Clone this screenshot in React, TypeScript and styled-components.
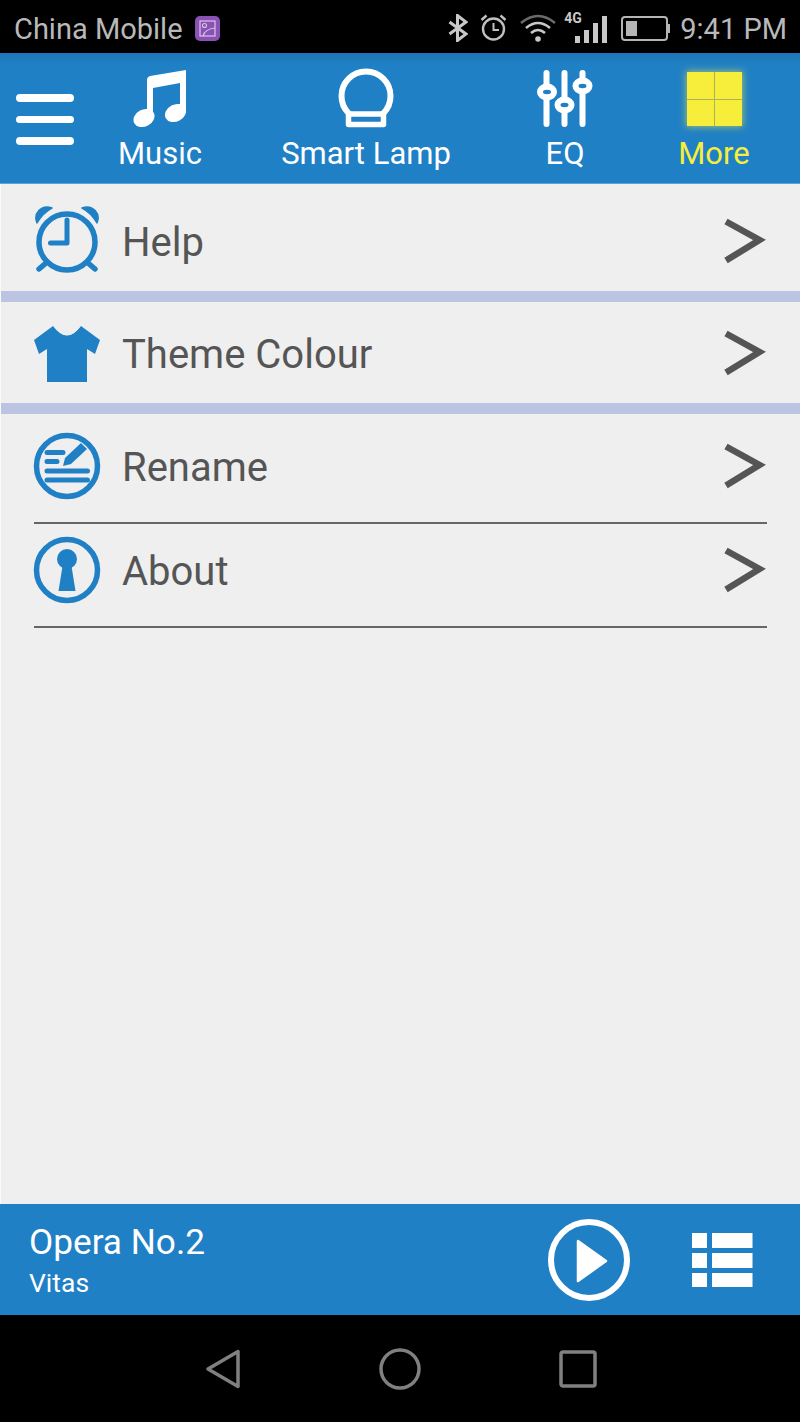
import React from "react";
import styled, { createGlobalStyle } from "styled-components";

const Global = createGlobalStyle`
  html, body { margin: 0; padding: 0; background: #000; }
  * { box-sizing: border-box; }
  #root { width: 800px; height: 1422px; }
`;

const BLUE = "#2080c5";

const Screen = styled.div`
  width: 800px;
  height: 1422px;
  display: flex;
  flex-direction: column;
  font-family: Roboto, "Liberation Sans", sans-serif;
  background: #efefef;
  overflow: hidden;
`;

const StatusBar = styled.div`
  height: 53px;
  flex: none;
  background: #000;
  color: #b9b9b9;
  display: flex;
  align-items: center;
  padding: 3px 13px 0 14px;
`;

const Carrier = styled.span`
  font-size: 29px;
  line-height: 1;
  position: relative;
  top: 1px;
`;

const StatusRight = styled.div`
  margin-left: auto;
  display: flex;
  align-items: center;
`;

const Clock = styled.span`
  font-size: 29px;
  line-height: 1;
  margin-left: 10px;
  position: relative;
  top: 1px;
`;

const Icon = styled.svg<{ $ml?: number }>`
  display: block;
  flex: none;
  margin-left: ${(p) => p.$ml ?? 0}px;
`;

const NetWrap = styled.div`
  position: relative;
  width: 43px;
  height: 32px;
  margin-left: 8px;
  flex: none;
`;

const FourG = styled.span`
  position: absolute;
  left: 0;
  top: -1px;
  font-size: 14px;
  line-height: 14px;
  font-weight: 700;
  color: #c8c8c8;
`;

const Header = styled.div`
  height: 131px;
  flex: none;
  background: linear-gradient(#1f75b6 0, ${BLUE} 12px);
  display: flex;
  border-bottom: 1px solid #5aa2d6;
`;

const Burger = styled.div`
  width: 74px;
  flex: none;
  padding: 41px 0 0 16px;
  display: flex;
  flex-direction: column;
  gap: 14px;
`;

const BurgerBar = styled.span`
  display: block;
  width: 58px;
  height: 7.5px;
  border-radius: 4px;
  background: #fff;
`;

const Tab = styled.div<{ $w: number; $on?: boolean }>`
  width: ${(p) => p.$w}px;
  flex: none;
  display: flex;
  flex-direction: column;
  align-items: center;
  color: ${(p) => (p.$on ? "#f7ee3c" : "#fff")};
`;

const TabIcon = styled.div`
  height: 78px;
  padding-top: 15px;
  display: flex;
  justify-content: center;
`;

const TabLabel = styled.span`
  font-size: 31px;
  line-height: 36px;
  margin-top: 5px;
`;

const Tiles = styled.div`
  width: 55px;
  height: 54px;
  margin-top: 4px;
  display: grid;
  grid-template-columns: 1fr 1fr;
  grid-template-rows: 1fr 1fr;
  gap: 1px;
  background: #a9b35a;
  box-shadow: 0 0 7px 1px rgba(247, 238, 60, 0.55);
`;

const Tile = styled.span`
  background: #f7ee3c;
`;

const List = styled.div`
  flex: 1;
  display: flex;
  flex-direction: column;
  background: #efefef;
  border-left: 1px solid #fafafa;
`;

const Row = styled.div<{ $h: number; $top?: number; $bottom?: number }>`
  height: ${(p) => p.$h}px;
  flex: none;
  display: flex;
  align-items: center;
  padding: ${(p) => p.$top ?? 0}px 34px ${(p) => p.$bottom ?? 0}px 32px;
`;

const RowLabel = styled.span`
  font-size: 40px;
  line-height: 44px;
  color: #555;
  margin-left: 21px;
  flex: 1;
  position: relative;
  top: 2px;
`;

const Band = styled.div`
  height: 11px;
  flex: none;
  background: #bcc4e4;
`;

const Rule = styled.div`
  height: 2px;
  flex: none;
  margin: 0 33px;
  background: #666;
`;

const Player = styled.div`
  height: 111px;
  flex: none;
  background: ${BLUE};
  display: flex;
  align-items: center;
  padding: 0 47px 0 29px;
  color: #fff;
`;

const Track = styled.div`
  flex: 1;
  display: flex;
  flex-direction: column;
  padding-top: 1px;
`;

const TrackTitle = styled.span`
  font-size: 35.2px;
  line-height: 40px;
`;

const TrackArtist = styled.span`
  font-size: 26.5px;
  line-height: 30px;
  margin-top: 6px;
`;

const NavBar = styled.div`
  height: 107px;
  flex: none;
  background: #000;
  display: flex;
  align-items: center;
  justify-content: center;
  padding-top: 1px;
`;

const NavSlot = styled.div<{ $w: number }>`
  width: ${(p) => p.$w}px;
  display: flex;
  justify-content: center;
`;

const Chevron = () => (
  <Icon width="44" height="46" viewBox="0 0 44 46">
    <path d="M4 3.5 L37.5 22 L4 42.5" fill="none" stroke="#555" strokeWidth="6.5" />
  </Icon>
);

const AlarmClock = () => (
  <Icon width="68" height="72" viewBox="33 206 68 72">
    <circle cx="67" cy="243" r="28" fill="none" stroke={BLUE} strokeWidth="5.5" />
    <path d="M67 221 V244 H50.5" fill="none" stroke={BLUE} strokeWidth="5" strokeLinecap="round" strokeLinejoin="round" />
    <path d="M37 224 C33 215 41 205 52 209 C46 212 41 217 37 224 Z" fill={BLUE} stroke={BLUE} strokeWidth="1.5" strokeLinejoin="round" />
    <path d="M97 224 C101 215 93 205 82 209 C88 212 93 217 97 224 Z" fill={BLUE} stroke={BLUE} strokeWidth="1.5" strokeLinejoin="round" />
    <path d="M46 264 L39 270 M88 264 L95 270" stroke={BLUE} strokeWidth="5.5" strokeLinecap="round" />
  </Icon>
);

const Shirt = () => (
  <Icon width="68" height="60" viewBox="33 323 68 60">
    <path d="M53 326 Q67 345 81 326 L100 340 L95 354 L87 349 V382 H47 V349 L39 354 L34 340 Z" fill={BLUE} />
    <path d="M55.5 326 Q67 342 79 326" fill="none" stroke="#efefef" strokeWidth="2.5" />
  </Icon>
);

const RenameIcon = () => (
  <Icon width="68" height="68" viewBox="33 431 68 68">
    <circle cx="67" cy="465" r="30.5" fill="none" stroke={BLUE} strokeWidth="5.5" />
    <path d="M47 451.5 H63 M47 460.5 H57 M47 470 H87.5 M47 479 H87.5" stroke={BLUE} strokeWidth="5" strokeLinecap="round" />
    <path d="M63 465 L65 457 L81 442 L87 448 L71 463 Z" fill={BLUE} />
  </Icon>
);

const Keyhole = () => (
  <Icon width="68" height="68" viewBox="33 535 68 68">
    <circle cx="67" cy="569" r="30.5" fill="none" stroke={BLUE} strokeWidth="5.5" />
    <circle cx="67" cy="558" r="10" fill={BLUE} />
    <path d="M63 562 H71 L75.5 590 H58.5 Z" fill={BLUE} />
  </Icon>
);

export default function App() {
  return (
    <Screen>
      <Global />
      <StatusBar>
        <Carrier>China Mobile</Carrier>
        <Icon $ml={12} width="25" height="25" viewBox="0 0 25 25">
          <rect width="25" height="25" rx="5" fill="#8a52b4" />
          <rect x="5" y="5" width="15" height="15" fill="none" stroke="#d9c7e6" strokeWidth="1.2" />
          <circle cx="9.5" cy="9.5" r="2" fill="none" stroke="#d9c7e6" strokeWidth="1.1" />
          <path d="M8 20 Q10 13 20 12" fill="none" stroke="#d9c7e6" strokeWidth="1.2" />
        </Icon>
        <StatusRight>
          <Icon width="20" height="28" viewBox="0 0 20 28">
            <path d="M1.5 8 L18 20 L9.5 26.5 V1.5 L18 8 L1.5 20" fill="none" stroke="#c8c8c8" strokeWidth="3" />
          </Icon>
          <Icon $ml={12} width="27" height="28" viewBox="0 0 27 28">
            <circle cx="13.5" cy="15" r="10.5" fill="none" stroke="#c0c0c0" strokeWidth="2.4" />
            <path d="M13.5 9 V16 H19" fill="none" stroke="#c0c0c0" strokeWidth="2" />
            <path d="M1.5 6 L6.5 1.5 M25.5 6 L20.5 1.5" stroke="#c0c0c0" strokeWidth="2.4" />
          </Icon>
          <Icon $ml={13} width="36" height="28" viewBox="0 0 36 28">
            <path d="M1 9 Q18 -5 35 9" fill="none" stroke="#6a6a6a" strokeWidth="2.6" />
            <path d="M6 14 Q18 4 30 14" fill="none" stroke="#c8c8c8" strokeWidth="2.6" />
            <path d="M11 19 Q18 13 25 19" fill="none" stroke="#c8c8c8" strokeWidth="2.6" />
            <circle cx="18" cy="25" r="2.8" fill="#c8c8c8" />
          </Icon>
          <NetWrap>
            <FourG>4G</FourG>
            <Icon width="43" height="32" viewBox="0 0 43 32">
              <rect x="11" y="24" width="5" height="7" fill="#c8c8c8" />
              <rect x="20" y="18" width="5" height="13" fill="#c8c8c8" />
              <rect x="29" y="11" width="5" height="20" fill="#c8c8c8" />
              <rect x="38" y="4" width="5" height="27" fill="#c8c8c8" />
            </Icon>
          </NetWrap>
          <Icon $ml={14} width="49" height="25" viewBox="0 0 49 25">
            <rect x="1" y="1" width="45" height="23" rx="3" fill="none" stroke="#b5b5b5" strokeWidth="2" />
            <rect x="5" y="5" width="11" height="15" fill="#b5b5b5" />
            <rect x="47" y="8" width="2" height="9" fill="#b5b5b5" />
          </Icon>
          <Clock>9:41 PM</Clock>
        </StatusRight>
      </StatusBar>

      <Header>
        <Burger>
          <BurgerBar />
          <BurgerBar />
          <BurgerBar />
        </Burger>
        <Tab $w={172}>
          <TabIcon>
            <Icon width="54" height="60" viewBox="133 68 54 60">
              <path d="M147 80 Q147 77 150 76 L186 70 V113 L180 113 V83 L153 88 V117 L147 117 Z" fill="#fff" />
              <ellipse cx="144" cy="118" rx="11" ry="8.5" transform="rotate(-28 144 118)" fill="#fff" />
              <ellipse cx="175.5" cy="113" rx="11" ry="8.5" transform="rotate(-28 175.5 113)" fill="#fff" />
            </Icon>
          </TabIcon>
          <TabLabel>Music</TabLabel>
        </Tab>
        <Tab $w={240}>
          <TabIcon>
            <Icon width="56" height="60" viewBox="339 68 56 60">
              <circle cx="367" cy="96" r="24.5" fill="none" stroke="#fff" strokeWidth="6" />
              <rect x="349.5" y="114" width="35" height="10.5" fill={BLUE} stroke="#fff" strokeWidth="5.5" strokeLinejoin="round" />
            </Icon>
          </TabIcon>
          <TabLabel>Smart Lamp</TabLabel>
        </Tab>
        <Tab $w={158}>
          <TabIcon>
            <Icon width="56" height="60" viewBox="537 68 56 60">
              <path d="M546.5 73 V124 M564.5 73 V124 M582.5 73 V124" stroke="#fff" strokeWidth="6" strokeLinecap="round" />
              <ellipse cx="547" cy="92" rx="10" ry="8.5" fill="#fff" />
              <ellipse cx="547" cy="92" rx="4" ry="2.2" fill={BLUE} />
              <ellipse cx="564.5" cy="105" rx="10" ry="8.5" fill="#fff" />
              <ellipse cx="564.5" cy="105" rx="4" ry="2.2" fill={BLUE} />
              <ellipse cx="582.5" cy="86" rx="10" ry="8.5" fill="#fff" />
              <ellipse cx="582.5" cy="86" rx="4" ry="2.2" fill={BLUE} />
            </Icon>
          </TabIcon>
          <TabLabel>EQ</TabLabel>
        </Tab>
        <Tab $w={140} $on>
          <TabIcon>
            <Tiles>
              <Tile />
              <Tile />
              <Tile />
              <Tile />
            </Tiles>
          </TabIcon>
          <TabLabel>More</TabLabel>
        </Tab>
      </Header>

      <List>
        <Row $h={107} $top={7}>
          <AlarmClock />
          <RowLabel>Help</RowLabel>
          <Chevron />
        </Row>
        <Band />
        <Row $h={101}>
          <Shirt />
          <RowLabel>Theme Colour</RowLabel>
          <Chevron />
        </Row>
        <Band />
        <Row $h={108} $bottom={5}>
          <RenameIcon />
          <RowLabel>Rename</RowLabel>
          <Chevron />
        </Row>
        <Rule />
        <Row $h={102} $bottom={11}>
          <Keyhole />
          <RowLabel>About</RowLabel>
          <Chevron />
        </Row>
        <Rule />
      </List>

      <Player>
        <Track>
          <TrackTitle>Opera No.2</TrackTitle>
          <TrackArtist>Vitas</TrackArtist>
        </Track>
        <Icon width="84" height="84" viewBox="547 1218 84 84">
          <circle cx="589" cy="1260" r="38" fill="none" stroke="#fff" strokeWidth="6" />
          <path d="M578 1241 L606 1261 L578 1281 Z" fill="#fff" stroke="#fff" strokeWidth="2.5" strokeLinejoin="round" />
        </Icon>
        <Icon $ml={61} width="61" height="56" viewBox="692 1232 61 56">
          <path d="M692 1233 H707 V1248 H692 Z M712 1233 H752.5 V1248 H712 Z M692 1253 H707 V1268 H692 Z M712 1253 H752.5 V1268 H712 Z M692 1273 H707 V1287 H692 Z M712 1273 H752.5 V1287 H712 Z" fill="#fff" />
        </Icon>
      </Player>

      <NavBar>
        <NavSlot $w={178}>
          <Icon width="40" height="42" viewBox="0 0 40 42">
            <path d="M36 3.5 V38.5 L6 21 Z" fill="none" stroke="#808080" strokeWidth="3.5" strokeLinejoin="round" />
          </Icon>
        </NavSlot>
        <NavSlot $w={178}>
          <Icon width="42" height="42" viewBox="0 0 42 42">
            <circle cx="21" cy="21" r="19" fill="none" stroke="#808080" strokeWidth="3.5" />
          </Icon>
        </NavSlot>
        <NavSlot $w={178}>
          <Icon width="38" height="38" viewBox="0 0 38 38">
            <rect x="2" y="2" width="34" height="34" rx="2" fill="none" stroke="#808080" strokeWidth="3.5" />
          </Icon>
        </NavSlot>
      </NavBar>
    </Screen>
  );
}
